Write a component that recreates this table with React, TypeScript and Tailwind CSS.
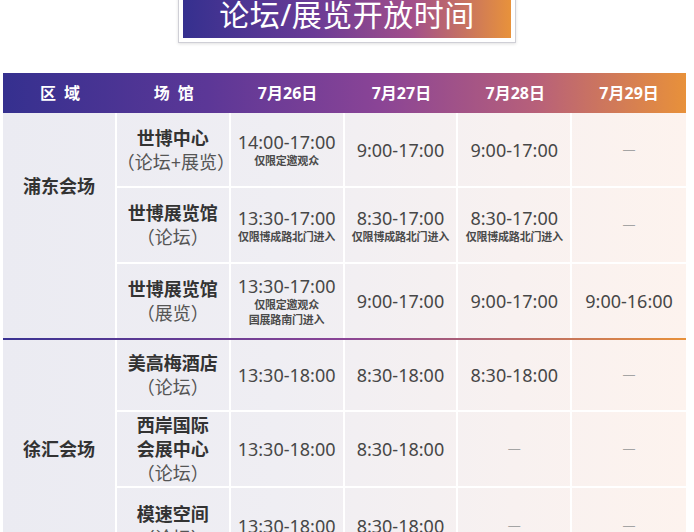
import React from 'react';

interface Slot {
  t: string;
  notes?: string[];
}

interface VenueRow {
  name: string[];
  sub: string;
  h: string;
  slots: (Slot | null)[];
}

interface Section {
  region: string;
  regionPad: string;
  rows: VenueRow[];
}

const sections: Section[] = [
  {
    region: '浦东会场',
    regionPad: 'pt-[61px]',
    rows: [
      {
        name: ['世博中心'],
        sub: '（论坛+展览）',
        h: 'h-[75px]',
        slots: [{ t: '14:00-17:00', notes: ['仅限定邀观众'] }, { t: '9:00-17:00' }, { t: '9:00-17:00' }, null],
      },
      {
        name: ['世博展览馆'],
        sub: '（论坛）',
        h: 'h-[76px]',
        slots: [
          { t: '13:30-17:00', notes: ['仅限博成路北门进入'] },
          { t: '8:30-17:00', notes: ['仅限博成路北门进入'] },
          { t: '8:30-17:00', notes: ['仅限博成路北门进入'] },
          null,
        ],
      },
      {
        name: ['世博展览馆'],
        sub: '（展览）',
        h: 'h-[74px]',
        slots: [
          { t: '13:30-17:00', notes: ['仅限定邀观众', '国展路南门进入'] },
          { t: '9:00-17:00' },
          { t: '9:00-17:00' },
          { t: '9:00-16:00' },
        ],
      },
    ],
  },
  {
    region: '徐汇会场',
    regionPad: 'pt-[97px]',
    rows: [
      {
        name: ['美高梅酒店'],
        sub: '（论坛）',
        h: 'h-[72px]',
        slots: [{ t: '13:30-18:00' }, { t: '8:30-18:00' }, { t: '8:30-18:00' }, null],
      },
      {
        name: ['西岸国际', '会展中心'],
        sub: '（论坛）',
        h: 'h-[76px]',
        slots: [{ t: '13:30-18:00' }, { t: '8:30-18:00' }, null, null],
      },
      {
        name: ['模速空间'],
        sub: '（论坛）',
        h: 'h-[76px]',
        slots: [{ t: '13:30-18:00' }, { t: '8:30-18:00' }, null, null],
      },
    ],
  },
];

const headers = ['区\u2002域', '场\u2002馆', '7月26日', '7月27日', '7月28日', '7月29日'];

function SlotCell({ slot, last, bottom }: { slot: Slot | null; last: boolean; bottom: boolean }) {
  return (
    <div
      className={`flex flex-col items-center justify-center ${last ? '' : 'border-r-2 border-white'} ${
        bottom ? '' : 'border-b-2 border-white'
      }`}
    >
      {slot ? (
        <>
          <div className="text-[18px] leading-[22px] text-[#474747]">{slot.t}</div>
          {slot.notes?.map((n) => (
            <div key={n} className="text-[11px] leading-[15px] font-bold text-[#4a4a4a] tracking-[-0.2px]">
              {n}
            </div>
          ))}
        </>
      ) : (
        <div className="text-[13px] text-[#a4a4a4]">—</div>
      )}
    </div>
  );
}

function TableSection({ section }: { section: Section }) {
  return (
    <div className="grid grid-cols-6 bg-[linear-gradient(90deg,#ebebf2_0%,#efeef3_40%,#f8f1f0_75%,#fdf3ee_100%)]">
      <div
        className={`row-span-3 flex items-start justify-center border-r-2 border-white ${section.regionPad} text-[18px] leading-6 font-bold text-[#333]`}
      >
        {section.region}
      </div>
      {section.rows.map((row, ri) => {
        const bottom = ri === section.rows.length - 1;
        return (
          <React.Fragment key={ri}>
            <div
              className={`${row.h} flex flex-col items-center justify-center border-r-2 border-white ${
                bottom ? '' : 'border-b-2'
              } text-[18px] leading-6`}
            >
              {row.name.map((n) => (
                <div key={n} className="font-bold text-[#333]">
                  {n}
                </div>
              ))}
              <div className="text-[#555]">{row.sub}</div>
            </div>
            {row.slots.map((s, si) => (
              <SlotCell key={si} slot={s} last={si === row.slots.length - 1} bottom={bottom} />
            ))}
          </React.Fragment>
        );
      })}
    </div>
  );
}

export default function App() {
  return (
    <div
      className="w-[694px] h-[532px] overflow-hidden bg-white"
      style={{ fontFamily: '"Noto Sans", "Noto Sans CJK SC", sans-serif' }}
    >
      {/* 标题 */}
      <div className="flex justify-center">
        <div className="mt-[-14px] w-[338px] border border-[#cfcfd6] bg-white p-[4px] shadow-[0_1px_3px_rgba(0,0,0,0.12)]">
          <div className="flex h-[47px] items-center justify-center bg-[linear-gradient(90deg,#35308f_0%,#6a3b96_40%,#a24f8a_70%,#e8923b_100%)] text-[30px] leading-none tracking-[0.5px] text-white">
            论坛/展览开放时间
          </div>
        </div>
      </div>

      {/* 表格 */}
      <div className="ml-[3px] mt-[30px] w-[683px]">
        <div className="grid h-[40px] grid-cols-6 bg-[linear-gradient(90deg,#35308f_0%,#5c3797_30%,#8a4496_55%,#b7607a_78%,#e8913a_100%)]">
          {headers.map((h) => (
            <div key={h} className="flex items-center justify-center text-[16px] font-bold text-white">
              {h}
            </div>
          ))}
        </div>
        <TableSection section={sections[0]} />
        <div className="h-[2px] bg-[linear-gradient(90deg,#3a3292,#8a4496_50%,#e8913a)]" />
        <TableSection section={sections[1]} />
      </div>
    </div>
  );
}
